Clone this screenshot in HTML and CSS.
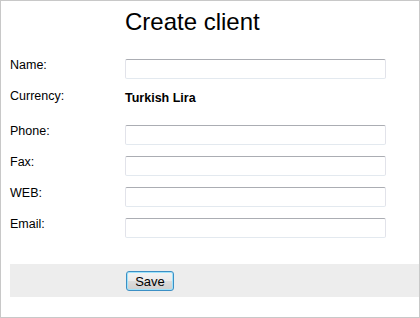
FILE: index.html
```html
<!DOCTYPE html>
<html lang="en">
<head>
  <meta charset="UTF-8">
  <title>Create client</title>
  <link rel="stylesheet" href="styles.css">
</head>
<body>

<div class="page">
  <h1 class="title">Create client</h1>

  <form class="client-form">
    <div class="row">
      <label for="name">Name:</label>
      <input type="text" id="name">
    </div>
    <div class="row row-static">
      <label>Currency:</label>
      <span class="value">Turkish Lira</span>
    </div>
    <div class="row">
      <label for="phone">Phone:</label>
      <input type="text" id="phone">
    </div>
    <div class="row">
      <label for="fax">Fax:</label>
      <input type="text" id="fax">
    </div>
    <div class="row">
      <label for="web">WEB:</label>
      <input type="text" id="web">
    </div>
    <div class="row">
      <label for="email">Email:</label>
      <input type="text" id="email">
    </div>

    <div class="actions">
      <button type="button" class="btn-save">Save</button>
    </div>
  </form>
</div>

</body>
</html>
```

FILE: styles.css
```css
* {
  margin: 0;
  padding: 0;
  box-sizing: border-box;
}

body {
  font-family: 'Liberation Sans', Arial, sans-serif;
  color: #000;
  background: #fff;
}

.page {
  width: 420px;
  height: 318px;
  border: 1px solid #c8c8c8;
  padding-top: 7px;
}

.title {
  font-size: 24px;
  font-weight: normal;
  line-height: 28px;
  margin-left: 124px;
  margin-bottom: 23px;
}

.client-form {
  display: flex;
  flex-direction: column;
}

.row {
  display: flex;
  align-items: flex-start;
  padding-left: 9px;
  margin-bottom: 11px;
}

.row label {
  width: 115px;
  font-size: 12.5px;
  line-height: 13px;
}

.row input {
  width: 261px;
  height: 20px;
  border: 1px solid #e2e3ea;
  border-top-color: #abadb3;
  border-bottom-color: #e3e9ef;
  border-radius: 2px;
  font-family: inherit;
  font-size: 12.5px;
  padding: 0 3px;
  background: #fff;
}

.row-static {
  height: 24px;
}

.row-static .value {
  font-size: 12.5px;
  font-weight: bold;
  line-height: 13px;
  padding-top: 2px;
}

/* barre du bouton */
.actions {
  margin-top: 15px;
  margin-left: 9px;
  background: #ededed;
  height: 33px;
  padding: 7px 0 6px 116px;
}

.btn-save {
  width: 48px;
  height: 20px;
  font-family: inherit;
  font-size: 13px;
  color: #000;
  border: 1px solid #3c8fc4;
  border-radius: 3px;
  box-shadow: inset 0 0 0 1px #9fe3fb;
  background: linear-gradient(#f3f3f3 0%, #ebebeb 50%, #dddddd 51%, #cfcfcf 100%);
  cursor: pointer;
}
```
